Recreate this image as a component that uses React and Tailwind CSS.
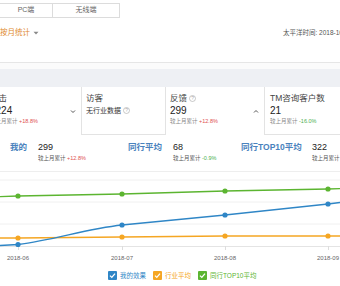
import React from "react";

const F = "font-['Liberation_Sans','Noto_Sans_CJK_SC',sans-serif]";

function Check({ color }) {
  return (
    <svg width="9" height="9" viewBox="0 0 9 9">
      <rect x="0" y="0" width="9" height="9" rx="1" fill={color} />
      <path d="M2 4.6 L3.8 6.4 L7 2.6" stroke="#fff" strokeWidth="1.3" fill="none" />
    </svg>
  );
}

function Info() {
  return (
    <svg width="7" height="7" viewBox="0 0 10 10" className="inline-block ml-[2px]">
      <circle cx="5" cy="5" r="4.3" stroke="#aaa" strokeWidth="0.9" fill="none" />
      <text x="5" y="7.6" fontSize="7" textAnchor="middle" fill="#aaa">?</text>
    </svg>
  );
}

function Chev({ up }) {
  return (
    <svg width="6" height="5" viewBox="0 0 6 5">
      <path d={up ? "M1 3.5 L3 1.5 L5 3.5" : "M1 1.5 L3 3.5 L5 1.5"} stroke="#555" strokeWidth="1" fill="none" />
    </svg>
  );
}

export default function App() {
  const xs = [18, 122, 225, 328];
  return (
    <div className={`w-[340px] h-[286px] overflow-hidden bg-white text-[#333] ${F}`}>
      {/* tabs */}
      <div className="pt-[3px] flex">
        <div className="flex ml-[-1px] h-[15px] border border-[#dcdcdc] text-[7px] text-[#666]">
          <div className="w-[53px] flex items-center justify-center border-r border-[#dcdcdc]">PC端</div>
          <div className="w-[66px] flex items-center justify-center">无线端</div>
        </div>
      </div>
      {/* month row */}
      <div className="mt-[10px] h-[10px] flex items-center whitespace-nowrap">
        <div className="w-[283px] shrink-0 flex items-center text-[7.5px] text-[#e0892d]">
          按月统计
          <svg width="6" height="4" viewBox="0 0 6 4" className="ml-[3px]">
            <path d="M0.5 0.8 L5.5 0.8 L3 3.4 Z" fill="#888" />
          </svg>
        </div>
        <div className="text-[6.5px] text-[#555]">太平洋时间: 2018-10-08</div>
      </div>
      {/* band */}
      <div className="mt-[24px] border-t border-[#e6e6e6] h-[7px] bg-[#fbfbfb]" />
      <div className="h-[18px] bg-[#eef0f4]" />
      {/* cards */}
      <div className="flex h-[48px] whitespace-nowrap">
        <div className="w-[82px] shrink-0 border-r border-[#e3e3e3] relative">
          <div className="ml-[-10px] pt-[5px]">
            <div className="text-[8.5px] leading-[12px] text-[#444]">点击</div>
            <div className="text-[10px] leading-[13px] text-[#222]">1224</div>
            <div className="text-[5.5px] leading-[9px] text-[#888]">
              较上月累计 <span className="text-[#e05050]">+18.8%</span>
            </div>
          </div>
          <div className="absolute left-[70px] top-[22px]"><Chev /></div>
        </div>
        <div className="w-[84px] shrink-0 border-r border-b border-[#e3e3e3] pl-[4px] pt-[5px]">
          <div className="text-[8.5px] leading-[12px] text-[#444]">访客</div>
          <div className="text-[7px] leading-[13px] text-[#333] flex items-center">无行业数据<Info /></div>
        </div>
        <div className="w-[99px] shrink-0 border-r border-[#e3e3e3] pl-[4px] pt-[5px] relative">
          <div className="text-[8.5px] leading-[12px] text-[#444] flex items-center">反馈<Info /></div>
          <div className="text-[10px] leading-[13px] text-[#222]">299</div>
          <div className="text-[5.5px] leading-[9px] text-[#888]">
            较上月累计 <span className="text-[#e05050]">+12.8%</span>
          </div>
          <div className="absolute left-[87px] top-[22px]"><Chev up /></div>
        </div>
        <div className="flex-1 border-b border-[#e3e3e3] pl-[5px] pt-[5px]">
          <div className="text-[8.5px] leading-[12px] text-[#444]">TM咨询客户数</div>
          <div className="text-[10px] leading-[13px] text-[#222]">21</div>
          <div className="text-[5.5px] leading-[9px] text-[#888]">
            较上月累计 <span className="text-[#4caf50]">-16.0%</span>
          </div>
        </div>
      </div>
      {/* compare row */}
      <div className="h-[37px] border-b border-[#eeeeee] flex pt-[6px] whitespace-nowrap">
        <div className="w-[128px] shrink-0 pl-[10px] flex">
          <div className="w-[28px] text-[8.5px] leading-[12px] font-semibold text-[#4a82bd]">我的</div>
          <div>
            <div className="text-[9px] leading-[12px] text-[#222]">299</div>
            <div className="text-[5.5px] leading-[9px] text-[#555] mt-[1px]">
              较上月累计 <span className="text-[#e05050]">+12.8%</span>
            </div>
          </div>
        </div>
        <div className="w-[113px] shrink-0 flex">
          <div className="w-[45px] text-[8.5px] leading-[12px] font-semibold text-[#4a82bd]">同行平均</div>
          <div>
            <div className="text-[9px] leading-[12px] text-[#222]">68</div>
            <div className="text-[5.5px] leading-[9px] text-[#555] mt-[1px]">
              较上月累计 <span className="text-[#4caf50]">-0.9%</span>
            </div>
          </div>
        </div>
        <div className="flex">
          <div className="w-[71px] text-[8.5px] leading-[12px] font-semibold text-[#4a82bd]">同行TOP10平均</div>
          <div>
            <div className="text-[9px] leading-[12px] text-[#222]">322</div>
            <div className="text-[5.5px] leading-[9px] text-[#555] mt-[1px]">
              较上月累计 <span className="text-[#e05050]">+10.2%</span>
            </div>
          </div>
        </div>
      </div>
      {/* chart */}
      <svg width="340" height="96" viewBox="0 0 340 96" className="block">
        {[8, 30, 52].map((y) => (
          <line key={y} x1="0" x2="340" y1={y} y2={y} stroke="#f0f0f0" strokeWidth="1" />
        ))}
        <line x1="0" x2="340" y1="74.5" y2="74.5" stroke="#e4e4e4" strokeWidth="1" />
        {xs.map((x) => (
          <line key={x} x1={x + 0.5} x2={x + 0.5} y1="74" y2="78" stroke="#ddd" strokeWidth="1" />
        ))}
        {["2018-06", "2018-07", "2018-08", "2018-09"].map((t, i) => (
          <text key={t} x={xs[i]} y="88" fontSize="6" fill="#666" textAnchor="middle">{t}</text>
        ))}
        <path d="M0 24.6 L18 24 L122 22 L225 19 L328 17 L340 16.7" stroke="#5cb531" strokeWidth="1.3" fill="none" />
        <path d="M0 66 L18 66 L122 65 L225 64 L328 64 L340 64" stroke="#f5a623" strokeWidth="1.3" fill="none" />
        <path d="M0 73.5 L18 72.5 C55 68 85 57 122 53 L225 43 L328 32 L340 30.5" stroke="#2f86c6" strokeWidth="1.3" fill="none" />
        {xs.map((x, i) => (
          <circle key={"g" + i} cx={x} cy={[24, 22, 19, 17][i]} r="2.6" fill="#5cb531" />
        ))}
        {xs.map((x, i) => (
          <circle key={"o" + i} cx={x} cy={[66, 65, 64, 64][i]} r="2.6" fill="#f5a623" />
        ))}
        {xs.map((x, i) => (
          <circle key={"b" + i} cx={x} cy={[72.5, 53, 43, 32][i]} r="2.6" fill="#2f86c6" />
        ))}
      </svg>
      <div className="mt-[3px] h-[9px] pl-[108px] flex items-center text-[6.5px] whitespace-nowrap">
        <Check color="#2f86c6" />
        <span className="ml-[3px] text-[#2f86c6]">我的效果</span>
        <span className="ml-[7px]"><Check color="#f5a623" /></span>
        <span className="ml-[3px] text-[#f5a623]">行业平均</span>
        <span className="ml-[7px]"><Check color="#5cb531" /></span>
        <span className="ml-[3px] text-[#5cb531]">同行TOP10平均</span>
      </div>
    </div>
  );
}
